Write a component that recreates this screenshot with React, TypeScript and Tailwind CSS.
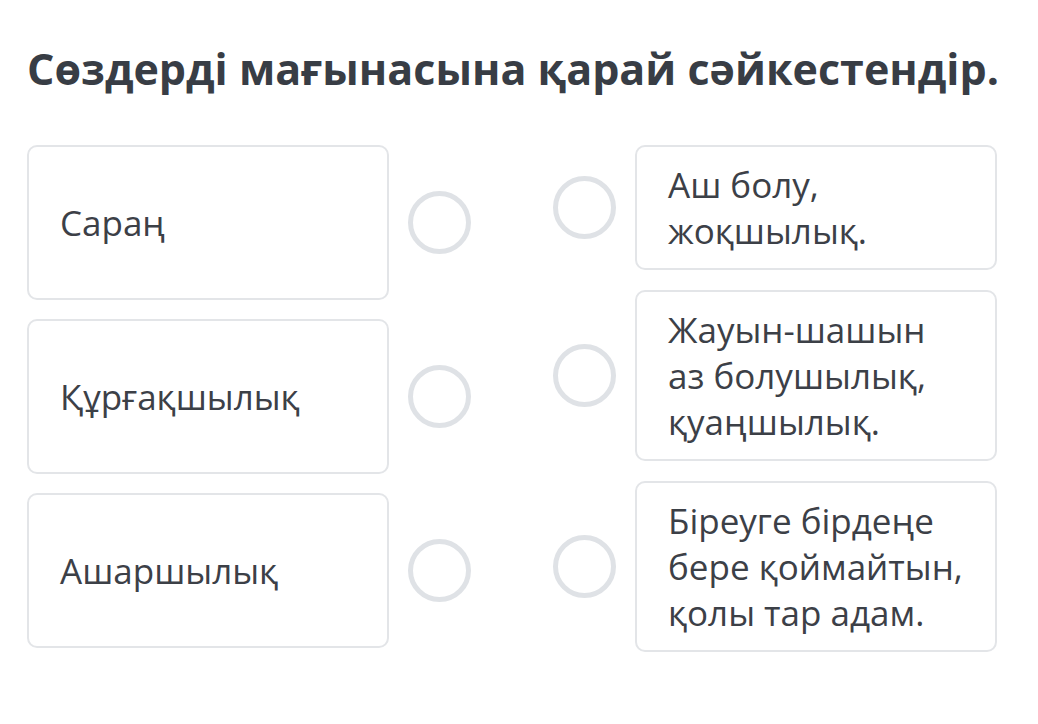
import React from "react";

const Circle = () => (
  <div className="w-[63px] h-[63px] shrink-0 rounded-full border-[5px] border-[#dfe2e6] bg-white" />
);

export default function App() {
  const left = ["Сараң", "Құрғақшылық", "Ашаршылық"];
  const right = [
    ["Аш болу,", "жоқшылық."],
    ["Жауын-шашын", "аз болушылық,", "қуаңшылық."],
    ["Біреуге бірдеңе", "бере қоймайтын,", "қолы тар адам."],
  ];
  return (
    <div
      className="w-[1038px] h-[724px] bg-white overflow-hidden"
      style={{ fontFamily: '"Open Sans", "Noto Sans", sans-serif' }}
    >
      <div className="pl-[27px] pt-[42px]">
        <h1 className="text-[43px] leading-[54px] font-bold text-[#383d45] whitespace-nowrap">
          Сөздерді мағынасына қарай сәйкестендір.
        </h1>
        <div className="mt-[49px] flex gap-[82px]">
          <div className="flex flex-col gap-[19px] w-[444px]">
            {left.map((t) => (
              <div key={t} className="flex items-center gap-[19px]">
                <div className="w-[362px] h-[155px] shrink-0 rounded-[10px] border-2 border-[#e3e5e8] flex items-center px-[31px] text-[35px] leading-[46px] text-[#3c4047]">
                  {t}
                </div>
                <Circle />
              </div>
            ))}
          </div>
          <div className="flex flex-col gap-[20px] w-[444px]">
            {right.map((lines, i) => (
              <div key={i} className="flex items-center gap-[19px]">
                <Circle />
                <div className="w-[362px] shrink-0 rounded-[10px] border-2 border-[#e3e5e8] px-[31px] py-[14.5px] text-[35px] leading-[46px] text-[#3c4047] whitespace-nowrap">
                  {lines.map((l) => (
                    <div key={l}>{l}</div>
                  ))}
                </div>
              </div>
            ))}
          </div>
        </div>
      </div>
    </div>
  );
}
